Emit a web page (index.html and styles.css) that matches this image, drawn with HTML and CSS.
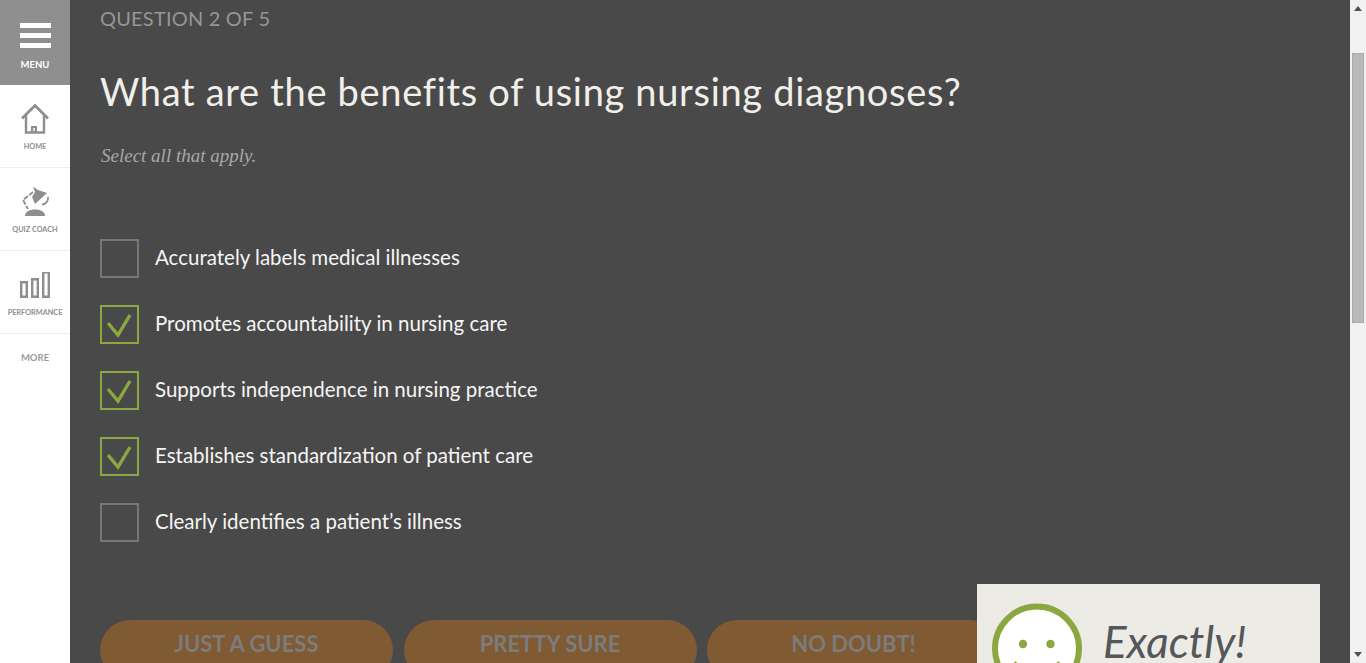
FILE: index.html
```html
<!DOCTYPE html>
<html lang="en">
    <head>
        <meta charset="UTF-8" />
        <title>Quiz</title>
        <link rel="stylesheet" href="styles.css">
    </head>
    <body>
        <nav class="sidebar">
            <a class="menu-btn">
                <span class="burger"><i></i><i></i><i></i></span>
                <span class="menu-label">MENU</span>
            </a>
            <a class="nav-item">
                <svg width="30" height="32" viewBox="0 0 30 32">
                    <path d="M2 16.500 15 3.500 28 16.500" fill="none" stroke="#8e8e92" stroke-width="2.800"/>
                    <path d="M6 13v17.500h18V13" fill="none" stroke="#8e8e92" stroke-width="2.400"/>
                    <path d="M11 24h6v6h-6Z" fill="#8e8e92"/>
                    <path d="M13 26h2v3h-2Z" fill="#dfe3ea"/>
                </svg>
                <span>HOME</span>
            </a>
            <a class="nav-item">
                <svg width="30" height="32" viewBox="0 0 30 32">
                    <path d="M13 1.500 18 5 27 8 15 19 12 12 15 7Z" fill="#8e8e92"/>
                    <path d="M28 12a6.500 6.500 0 0 1-6 7.500" fill="none" stroke="#8e8e92" stroke-width="1.800"/>
                    <path d="M13 7 3 15 8 24" fill="none" stroke="#8e8e92" stroke-width="1.800" stroke-dasharray="5 1.500"/>
                    <path d="M5 31c0-4 4-6.500 10-6.500s10 2.500 10 6.500Z" fill="#8e8e92"/>
                </svg>
                <span>QUIZ COACH</span>
            </a>
            <a class="nav-item">
                <svg width="30" height="28" viewBox="0 0 30 28">
                    <path d="M1.200 10.200h5.600v14.600H1.200ZM12.200 7.200h5.600v17.600h-5.600ZM23.200 0.200h5.600v24.600h-5.600Z" fill="none" stroke="#8e8e92" stroke-width="2.400"/>
                </svg>
                <span>PERFORMANCE</span>
            </a>
            <a class="nav-more">MORE</a>
        </nav>

        <main class="content">
            <p class="counter">QUESTION 2 OF 5</p>
            <h1 class="question">What are the benefits of using nursing diagnoses?</h1>
            <p class="hint">Select all that apply.</p>

            <ul class="answers">
                <li class="answer"><span class="box"></span><span class="answer-text">Accurately labels medical illnesses</span></li>
                <li class="answer"><span class="box checked"><svg width="27" height="27" viewBox="0 0 27 27"><path d="M2 12 12 24 24 4" fill="none" stroke="#8aa83f" stroke-width="3.400"/></svg></span><span class="answer-text">Promotes accountability in nursing care</span></li>
                <li class="answer"><span class="box checked"><svg width="27" height="27" viewBox="0 0 27 27"><path d="M2 12 12 24 24 4" fill="none" stroke="#8aa83f" stroke-width="3.400"/></svg></span><span class="answer-text">Supports independence in nursing practice</span></li>
                <li class="answer"><span class="box checked"><svg width="27" height="27" viewBox="0 0 27 27"><path d="M2 12 12 24 24 4" fill="none" stroke="#8aa83f" stroke-width="3.400"/></svg></span><span class="answer-text">Establishes standardization of patient care</span></li>
                <li class="answer"><span class="box"></span><span class="answer-text">Clearly identifies a patient’s illness</span></li>
            </ul>

            <div class="confidence">
                <button class="pill">JUST A GUESS</button>
                <button class="pill">PRETTY SURE</button>
                <button class="pill">NO DOUBT!</button>
            </div>

            <aside class="feedback">
                <svg class="smiley" width="92" height="92" viewBox="0 0 92 92">
                    <circle cx="46" cy="45.500" r="42" fill="#fff" stroke="#8aa83f" stroke-width="6"/>
                    <circle cx="32" cy="41" r="4.200" fill="#8aa83f"/>
                    <circle cx="59.500" cy="41" r="4.200" fill="#8aa83f"/>
                    <path d="M23 60q23 16 46 0" fill="none" stroke="#8aa83f" stroke-width="4"/>
                </svg>
                <span class="feedback-text">Exactly!</span>
            </aside>
        </main>

        <div class="scrollbar">
            <span class="arrow-up"></span>
            <span class="thumb"></span>
            <span class="arrow-down"></span>
        </div>
    </body>
</html>
```

FILE: styles.css
```css
* {
    box-sizing: border-box;
}
html, body {
    height: 100%;
}
body {
    margin: 0;
    display: flex;
    height: 663px;
    overflow: hidden;
    background: #494949;
    font-family: "Lato", "Liberation Sans", sans-serif;
}

/* sidebar */
.sidebar {
    width: 70px;
    flex: none;
    background: white;
    display: flex;
    flex-direction: column;
}
.menu-btn {
    height: 85px;
    background: #8f8f8f;
    color: white;
    display: flex;
    flex-direction: column;
    align-items: center;
    padding-top: 23px;
}
.burger {
    display: flex;
    flex-direction: column;
    gap: 5px;
    width: 31px;
}
.burger i {
    display: block;
    height: 5px;
    background: white;
}
.menu-label {
    font-size: 9.500px;
    font-weight: 700;
    margin-top: 11px;
}
.nav-item {
    height: 83px;
    border-bottom: 1px solid #eeeeee;
    display: flex;
    flex-direction: column;
    align-items: center;
    justify-content: flex-end;
    padding-bottom: 16px;
    color: #8e8e92;
    font-size: 7.300px;
    font-weight: 700;
    white-space: nowrap;
}
.nav-item svg {
    margin-bottom: 8px;
}
.nav-more {
    text-align: center;
    padding-top: 18px;
    color: #a09a94;
    font-size: 9.500px;
    font-weight: 700;
}

/* quiz */
.content {
    flex: 1;
    position: relative;
    padding: 6px 0 0 30px;
    overflow: hidden;
}
.counter {
    margin: 0;
    color: #969696;
    font-size: 20px;
    line-height: 24px;
    letter-spacing: 0.2px;
}
.question {
    margin: 38px 0 0;
    color: #f0efe9;
    font-size: 38px;
    font-weight: 400;
    line-height: 46px;
    letter-spacing: 0.68px;
}
.hint {
    margin: 30px 0 0 1px;
    color: #a8a8a8;
    font-family: "Liberation Serif", serif;
    font-size: 19px;
    font-style: italic;
    line-height: 24px;
}
.answers {
    list-style: none;
    margin: 71px 0 0;
    padding: 0;
}
.answer {
    display: flex;
    align-items: center;
    gap: 16px;
    height: 39px;
    margin-bottom: 27px;
    color: #f5f5f5;
    font-size: 20.500px;
}
.answer-text {
    margin-bottom: 3px;
}
.box {
    width: 39px;
    height: 39px;
    flex: none;
    border: 2px solid #777777;
    display: flex;
    align-items: center;
    justify-content: center;
}
.box.checked {
    border-color: #8aa83f;
}
.confidence {
    display: flex;
    gap: 10.500px;
    margin-top: 78px;
}
.pill {
    width: 293px;
    height: 60px;
    flex: none;
    border: none;
    border-radius: 30px;
    background: #7f5a33;
    color: #7c7c7c;
    font-family: inherit;
    font-size: 22px;
    font-weight: 700;
    padding: 0 0 14px;
}

/* popup over the buttons */
.feedback {
    position: absolute;
    left: 907px;
    top: 584px;
    width: 343px;
    height: 120px;
    background: #ecebe6;
    display: flex;
    align-items: flex-start;
    gap: 20px;
    padding: 19px 0 0 14px;
}
.smiley {
    flex: none;
}
.feedback-text {
    color: #55575a;
    font-size: 44px;
    font-style: italic;
    line-height: 76px;
}

/* fake scrollbar, the screenshot has one */
.scrollbar {
    width: 16px;
    flex: none;
    background: #f1f1f1;
    display: flex;
    flex-direction: column;
    align-items: center;
    position: relative;
}
.arrow-up {
    margin-top: 6px;
    width: 0;
    height: 0;
    border: 4px solid transparent;
    border-top: none;
    border-bottom: 5px solid #505050;
}
.thumb {
    width: 12px;
    height: 270px;
    margin-top: 42px;
    background: #b9b9b9;
    border: 1px solid #a9a9a9;
}
.arrow-down {
    margin-top: auto;
    margin-bottom: 6px;
    width: 0;
    height: 0;
    border: 4px solid transparent;
    border-bottom: none;
    border-top: 5px solid #505050;
}
```
